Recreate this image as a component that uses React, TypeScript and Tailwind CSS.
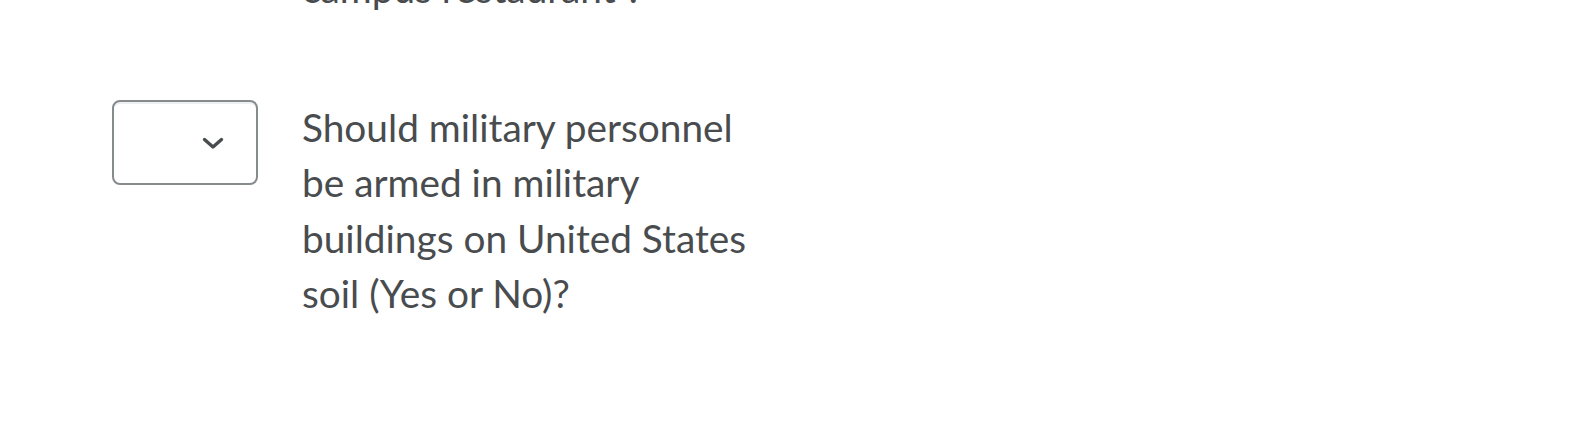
import React from 'react';

const questions = [
  'Should licensed civilians be allowed to carry guns in a campus restaurant ?',
  'Should military personnel be armed in military buildings on United States soil (Yes or No)?',
];

const Chevron = () => (
  <svg width="22" height="13" viewBox="0 0 22 13" fill="none">
    <path d="M2.5 2.5L11 10L19.5 2.5" stroke="#494c4e" strokeWidth="3.4" strokeLinecap="round" strokeLinejoin="round" />
  </svg>
);

const QuestionRow = ({ text }: { text: string }) => (
  <div className="flex items-start">
    <div className="relative w-[146px] h-[85px] shrink-0 rounded-[8px] border-2 border-[#868b8e] bg-white shadow-[inset_0_2px_0_0_#eef0f1]">
      <div className="absolute left-[88px] top-[35px]">
        <Chevron />
      </div>
    </div>
    <p className="ml-[44px] w-[470px] text-[38.8px] leading-[55.5px] text-[#494c4e]">{text}</p>
  </div>
);

export default function App() {
  return (
    <div className="w-[1584px] h-[428px] overflow-hidden bg-white font-['Lato','Liberation_Sans',sans-serif]">
      <div className="pl-[112px] mt-[-150px] flex flex-col gap-[83px]">
        {questions.map((q) => (
          <QuestionRow key={q} text={q} />
        ))}
      </div>
    </div>
  );
}
